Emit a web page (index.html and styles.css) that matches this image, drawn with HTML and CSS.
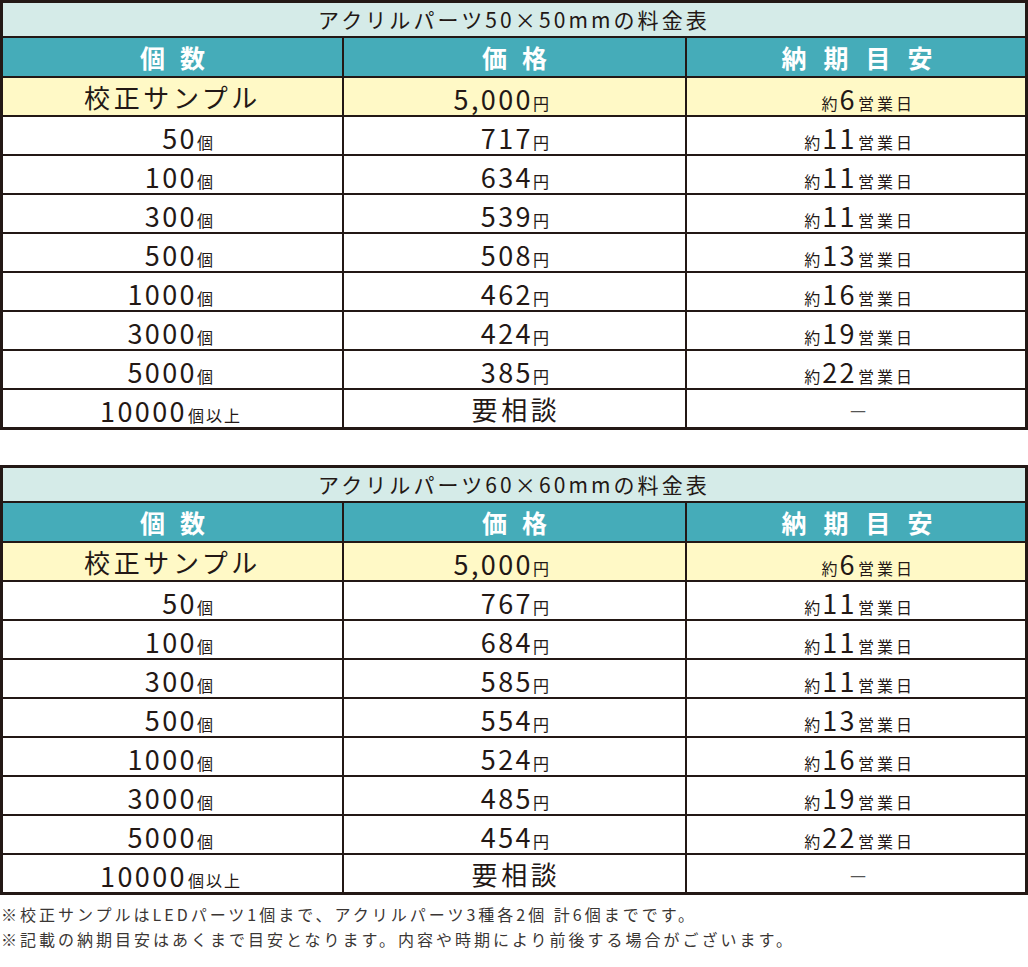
FILE: index.html
```html
<!DOCTYPE html>
<html lang="ja">
<head>
<meta charset="utf-8">
<title>アクリルパーツ料金表</title>
<link rel="stylesheet" href="styles.css">
</head>
<body>
<div class="page">
  <div class="table">
    <div class="cell title">アクリルパーツ50×50mmの料金表</div>
    <div class="cell head h1">個数</div>
    <div class="cell head h2">価格</div>
    <div class="cell head h3">納期目安</div>

    <div class="cell sample c1 mid"><span class="big">校正サンプル</span></div>
    <div class="cell sample c2"><span class="v"><span class="num">5,000</span><span class="u">円</span></span></div>
    <div class="cell sample c3"><span class="v"><span class="u pre">約</span><span class="num">6</span><span class="u days">営業日</span></span></div>

    <div class="cell c1"><span class="v"><span class="num">50</span><span class="u">個</span></span></div>
    <div class="cell c2"><span class="v"><span class="num">717</span><span class="u">円</span></span></div>
    <div class="cell c3"><span class="v"><span class="u pre">約</span><span class="num">11</span><span class="u days">営業日</span></span></div>

    <div class="cell c1"><span class="v"><span class="num">100</span><span class="u">個</span></span></div>
    <div class="cell c2"><span class="v"><span class="num">634</span><span class="u">円</span></span></div>
    <div class="cell c3"><span class="v"><span class="u pre">約</span><span class="num">11</span><span class="u days">営業日</span></span></div>

    <div class="cell c1"><span class="v"><span class="num">300</span><span class="u">個</span></span></div>
    <div class="cell c2"><span class="v"><span class="num">539</span><span class="u">円</span></span></div>
    <div class="cell c3"><span class="v"><span class="u pre">約</span><span class="num">11</span><span class="u days">営業日</span></span></div>

    <div class="cell c1"><span class="v"><span class="num">500</span><span class="u">個</span></span></div>
    <div class="cell c2"><span class="v"><span class="num">508</span><span class="u">円</span></span></div>
    <div class="cell c3"><span class="v"><span class="u pre">約</span><span class="num">13</span><span class="u days">営業日</span></span></div>

    <div class="cell c1"><span class="v"><span class="num">1000</span><span class="u">個</span></span></div>
    <div class="cell c2"><span class="v"><span class="num">462</span><span class="u">円</span></span></div>
    <div class="cell c3"><span class="v"><span class="u pre">約</span><span class="num">16</span><span class="u days">営業日</span></span></div>

    <div class="cell c1"><span class="v"><span class="num">3000</span><span class="u">個</span></span></div>
    <div class="cell c2"><span class="v"><span class="num">424</span><span class="u">円</span></span></div>
    <div class="cell c3"><span class="v"><span class="u pre">約</span><span class="num">19</span><span class="u days">営業日</span></span></div>

    <div class="cell c1"><span class="v"><span class="num">5000</span><span class="u">個</span></span></div>
    <div class="cell c2"><span class="v"><span class="num">385</span><span class="u">円</span></span></div>
    <div class="cell c3"><span class="v"><span class="u pre">約</span><span class="num">22</span><span class="u days">営業日</span></span></div>

    <div class="cell c1 mid"><span class="v"><span class="num">10000</span><span class="u wide">個以上</span></span></div>
    <div class="cell c2 mid"><span class="big">要相談</span></div>
    <div class="cell c3 mid"><span class="dash">—</span></div>
  </div>

  <div class="table second">
    <div class="cell title">アクリルパーツ60×60mmの料金表</div>
    <div class="cell head h1">個数</div>
    <div class="cell head h2">価格</div>
    <div class="cell head h3">納期目安</div>

    <div class="cell sample c1 mid"><span class="big">校正サンプル</span></div>
    <div class="cell sample c2"><span class="v"><span class="num">5,000</span><span class="u">円</span></span></div>
    <div class="cell sample c3"><span class="v"><span class="u pre">約</span><span class="num">6</span><span class="u days">営業日</span></span></div>

    <div class="cell c1"><span class="v"><span class="num">50</span><span class="u">個</span></span></div>
    <div class="cell c2"><span class="v"><span class="num">767</span><span class="u">円</span></span></div>
    <div class="cell c3"><span class="v"><span class="u pre">約</span><span class="num">11</span><span class="u days">営業日</span></span></div>

    <div class="cell c1"><span class="v"><span class="num">100</span><span class="u">個</span></span></div>
    <div class="cell c2"><span class="v"><span class="num">684</span><span class="u">円</span></span></div>
    <div class="cell c3"><span class="v"><span class="u pre">約</span><span class="num">11</span><span class="u days">営業日</span></span></div>

    <div class="cell c1"><span class="v"><span class="num">300</span><span class="u">個</span></span></div>
    <div class="cell c2"><span class="v"><span class="num">585</span><span class="u">円</span></span></div>
    <div class="cell c3"><span class="v"><span class="u pre">約</span><span class="num">11</span><span class="u days">営業日</span></span></div>

    <div class="cell c1"><span class="v"><span class="num">500</span><span class="u">個</span></span></div>
    <div class="cell c2"><span class="v"><span class="num">554</span><span class="u">円</span></span></div>
    <div class="cell c3"><span class="v"><span class="u pre">約</span><span class="num">13</span><span class="u days">営業日</span></span></div>

    <div class="cell c1"><span class="v"><span class="num">1000</span><span class="u">個</span></span></div>
    <div class="cell c2"><span class="v"><span class="num">524</span><span class="u">円</span></span></div>
    <div class="cell c3"><span class="v"><span class="u pre">約</span><span class="num">16</span><span class="u days">営業日</span></span></div>

    <div class="cell c1"><span class="v"><span class="num">3000</span><span class="u">個</span></span></div>
    <div class="cell c2"><span class="v"><span class="num">485</span><span class="u">円</span></span></div>
    <div class="cell c3"><span class="v"><span class="u pre">約</span><span class="num">19</span><span class="u days">営業日</span></span></div>

    <div class="cell c1"><span class="v"><span class="num">5000</span><span class="u">個</span></span></div>
    <div class="cell c2"><span class="v"><span class="num">454</span><span class="u">円</span></span></div>
    <div class="cell c3"><span class="v"><span class="u pre">約</span><span class="num">22</span><span class="u days">営業日</span></span></div>

    <div class="cell c1 mid"><span class="v"><span class="num">10000</span><span class="u wide">個以上</span></span></div>
    <div class="cell c2 mid"><span class="big">要相談</span></div>
    <div class="cell c3 mid"><span class="dash">—</span></div>
  </div>

  <div class="notes">
    <p>※校正サンプルはLEDパーツ1個まで、アクリルパーツ3種各2個 計6個までです。</p>
    <p>※記載の納期目安はあくまで目安となります。内容や時期により前後する場合がございます。</p>
  </div>
</div>
</body>
</html>
```

FILE: styles.css
```css
html, body {
  margin: 0;
  padding: 0;
  background: #ffffff;
}

body {
  font-family: "Noto Sans CJK JP", "Noto Sans", sans-serif;
  color: #231815;
}

.page {
  width: 1028px;
}

.table {
  display: grid;
  grid-template-columns: 339px 341px 338px;
  grid-template-rows: 33px 38px 37px repeat(8, 37px);
  gap: 2px;
  border: 3px solid #231815;
  background: #231815;
}

.table.second {
  margin-top: 35px;
}

.cell {
  background: #ffffff;
  display: flex;
  align-items: center;
  justify-content: flex-end;
  line-height: 1;
}

.title {
  grid-column: 1 / -1;
  background: #d5ebe8;
  justify-content: center;
  font-size: 21px;
  letter-spacing: 3.1px;
  padding-left: 0;
}

.head {
  background: #45acb9;
  color: #ffffff;
  font-weight: 700;
  font-size: 25px;
  justify-content: center;
}

.h1, .h2 {
  letter-spacing: 15px;
  padding-left: 15px;
}

.h3 {
  letter-spacing: 17px;
  padding-left: 19px;
}

.sample {
  background: #fff9c6;
}

.c1 { padding-right: 129px; }
.c2 { padding-right: 136px; }
.c3 { padding-right: 110px; }

.cell.mid {
  justify-content: center;
  padding-right: 0;
}

.c1.mid { padding-right: 3px; }
.c2.mid { padding-left: 0; }
.c3.mid { padding-left: 4px; }

.v {
  display: inline-block;
  white-space: nowrap;
  padding-top: 3px;
}

.num {
  font-size: 27px;
  letter-spacing: 2.4px;
}

.u {
  font-size: 16px;
}

.u.pre {
  margin-right: 2px;
}

.u.days {
  letter-spacing: 3px;
  padding-left: 1px;
}

.u.wide {
  letter-spacing: 2px;
  margin-left: 1px;
}

.big {
  font-size: 26px;
  letter-spacing: 3.6px;
  padding-left: 3px;
  padding-top: 1px;
}

.dash {
  font-size: 18px;
  color: #555;
}

.notes {
  margin-top: 7px;
  color: #3a3634;
  font-size: 16px;
  line-height: 25px;
  letter-spacing: 3px;
}

.notes p {
  margin: 0;
  padding-left: 1px;
}
```
